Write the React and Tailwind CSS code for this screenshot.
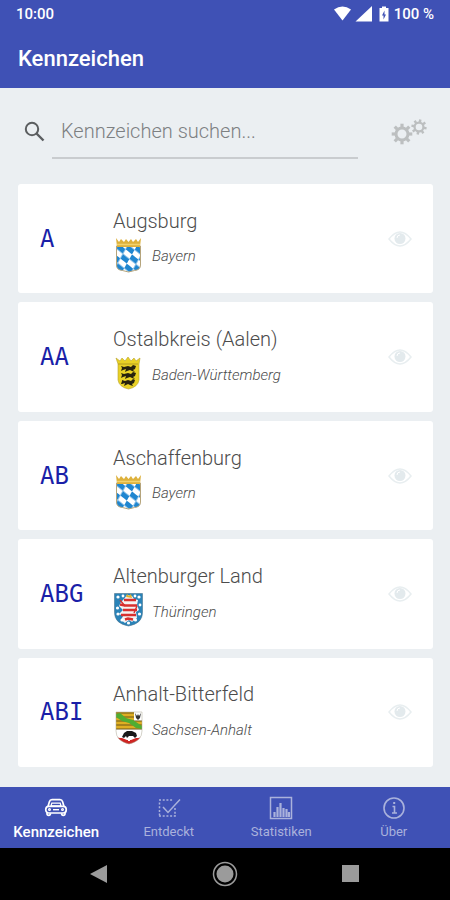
import React, { useState } from 'react'

const TEETH = [0, 45, 90, 135, 180, 225, 270, 315]

const DISTRICTS = [
  { code: 'A', name: 'Augsburg', state: 'Bayern', Arms: BayernArms },
  { code: 'AA', name: 'Ostalbkreis (Aalen)', state: 'Baden-Württemberg', Arms: BadenArms },
  { code: 'AB', name: 'Aschaffenburg', state: 'Bayern', Arms: BayernArms },
  { code: 'ABG', name: 'Altenburger Land', state: 'Thüringen', Arms: ThueringenArms },
  { code: 'ABI', name: 'Anhalt-Bitterfeld', state: 'Sachsen-Anhalt', Arms: SachsenAnhaltArms },
]

const TABS = [
  { label: 'Kennzeichen', Icon: CarIcon },
  { label: 'Entdeckt', Icon: FoundIcon },
  { label: 'Statistiken', Icon: ChartIcon },
  { label: 'Über', Icon: InfoIcon },
]

function BayernArms() {
  return (
    <svg viewBox="0 0 30 36" className="h-9 w-[30px]" aria-hidden="true">
      <defs>
        <pattern
          id="rauten"
          width="2"
          height="2"
          patternUnits="userSpaceOnUse"
          patternTransform="matrix(6.5 5.2 -2.6 4.6 5 7)"
        >
          <path fill="#fff" d="M0 0h2v2H0z" />
          <path fill="#1f86d0" d="M0 0h1v1H0zM1 1h1v1H1z" />
        </pattern>
      </defs>
      <path
        d="M2.500 9h24v19q0 5-6 5.500l-6 1.500l-6-1.500q-6-.5-6-5.500z"
        fill="url(#rauten)"
        stroke="#b5a47c"
      />
      <path d="M2 1l3 4 2-3 3 3 2-3 2.500 3 2.500-3 2 3 3-3 2 3 3-4-1 9H3z" fill="#ddb13c" />
      <path d="M3 7.500h23" stroke="#f2d36c" strokeWidth="1.500" />
    </svg>
  )
}

function BadenArms() {
  return (
    <svg viewBox="0 0 30 36" className="h-9 w-[30px]" aria-hidden="true">
      <path
        d="M2 3l4 3 2-3 3 3 3-4 3 4 3-3 2 3 4-3-1 6v16q-1 7-10.500 9q-9.500-2-10.500-9V9z"
        fill="#e9d125"
        stroke="#b7a22c"
        strokeWidth=".6"
      />
      <path d="M4 9h20" stroke="#b59c21" />
      <g fill="#27220d">
        <path d="M7 11l3 1 4-1 3 1 2-2 3 1-1 3-2 1 2 2-3-1-2-1-3 1-2 1 1-3-3 1-2 1 1-3z" />
        <path d="M7 18l3 1 4-1 3 1 2-2 3 1-1 3-2 1 2 2-3-1-2-1-3 1-2 1 1-3-3 1-2 1 1-3z" />
        <path d="M8 25l3 1 3-1 3 1 2-2 2 1-1 3-2 1 1 2-3-1-2-1-2 1-2 1 1-3-3 1-1 0 1-3z" />
      </g>
    </svg>
  )
}

function ThueringenArms() {
  return (
    <svg viewBox="0 0 30 36" className="h-9 w-[30px]" aria-hidden="true">
      <path
        d="M.5 1.500h28v19q0 11-14 13.500q-14-2.500-14-13.500z"
        fill="#2a83b8"
        stroke="#49748e"
        strokeWidth=".6"
      />
      <path d="M10 7l3-4 5 1 2 3 4 1-1 5 2 5-3 2 1 6-5 4-3-2-4 3-4-3 2-4-4-2 4-4-4-4 2-4z" fill="#f5f4f4" />
      <g stroke="#d8302f" strokeWidth="2.400" fill="none">
        <path d="M10 8h12M6 12.500l5 1h12M9 18h14M7 23h15M11 27.500l3-1 5 1" />
        <path d="M6 8l5 6M23 14l-3 7" strokeWidth="1.400" />
      </g>
      <path d="M12 5l1-3 2 2 2-2 1 4z" fill="#e6b028" />
      <g fill="#fff">
        <circle cx="4" cy="5" r="1.600" />
        <circle cx="9" cy="4" r="1.400" />
        <circle cx="21" cy="4" r="1.400" />
        <circle cx="25" cy="5" r="1.600" />
        <circle cx="3.500" cy="16" r="1.600" />
        <circle cx="26" cy="13" r="1.400" />
        <circle cx="4" cy="22" r="1.600" />
        <circle cx="25.500" cy="22" r="1.600" />
        <circle cx="8" cy="28" r="1.600" />
        <circle cx="21.500" cy="28" r="1.600" />
        <circle cx="14.500" cy="31" r="1.600" />
      </g>
    </svg>
  )
}

function SachsenAnhaltArms() {
  return (
    <svg viewBox="0 0 30 36" className="h-9 w-[30px]" aria-hidden="true">
      <clipPath id="anhalt">
        <path d="M2 2h26v19q0 10-13 13q-13-3-13-13z" />
      </clipPath>
      <g clipPath="url(#anhalt)">
        <path fill="#fff" d="M0 0h30v36H0z" />
        <path fill="#dfae22" d="M2 2h18v9h8v8H2z" />
        <path stroke="#6c5716" strokeWidth="1" d="M2 3h18M2 7h18M2 11h26M2 15h26M2 19h26" />
        <path d="M2 4l4-1 6 5 7 2 9 6v3l-6-1-7-5-7-2-6-4z" fill="#50ad32" />
        <path d="M21 3l2 3 1-2 1 2 2-3-1 5-2 2-2-2z" fill="#343434" />
        <path d="M0 27l6 1 2 0 5 2h4l5-2 2 0 6-1v9H0z" fill="#cf2523" />
        <path d="M14 27h2v4h-2z" fill="#fff" />
        <path d="M8 27l2-4 3-2 5 0 4 2 1 3-2 2-2-2-4 0-2 2-1-2-2 2z" fill="#191919" />
      </g>
      <path d="M2 2h26v19q0 10-13 13q-13-3-13-13z" fill="none" stroke="#a9a493" strokeWidth=".5" />
    </svg>
  )
}

function SearchIcon() {
  return (
    <svg viewBox="0 0 24 24" className="size-6" fill="none" stroke="#5b5e60" strokeWidth="2" aria-hidden="true">
      <circle cx="9" cy="9" r="6.200" />
      <path d="M13.500 13.500l7 7" strokeWidth="2.400" />
    </svg>
  )
}

function GearsIcon() {
  return (
    <svg viewBox="0 0 36 28" className="h-7 w-9" fill="none" stroke="#bcbfc0" aria-hidden="true">
      <circle cx="11" cy="16" r="6" strokeWidth="3" />
      {TEETH.map(a => (
        <path key={a} d="M11 9.500V5.700" strokeWidth="3.200" transform={`rotate(${a} 11 16)`} />
      ))}
      <circle cx="28" cy="9" r="4.400" strokeWidth="2.200" />
      {TEETH.map(a => (
        <path key={a} d="M28 4.500V1.300" strokeWidth="2.400" transform={`rotate(${a + 10} 28 9)`} />
      ))}
    </svg>
  )
}

function EyeIcon() {
  return (
    <svg viewBox="0 0 24 16" className="h-4 w-6" aria-hidden="true">
      <path d="M1 8q11-14 22 0q-11 14-22 0z" fill="none" stroke="#e8eef0" strokeWidth="1.500" />
      <circle cx="12" cy="7.500" r="5.500" fill="#e3eaed" />
      <path d="M9 7q0-3 3-3" fill="none" stroke="#fff" />
    </svg>
  )
}

function CarIcon() {
  return (
    <svg viewBox="0 0 24 24" className="size-6" fill="none" stroke="currentColor" strokeWidth="1.700" aria-hidden="true">
      <path d="M4 10.500l1.400-4.800q.6-2 2.600-2h8q2 0 2.600 2l1.400 4.800" />
      <path d="M7 9.800l.8-2.600h8.400l.8 2.600z" strokeWidth="1.200" />
      <rect x="1.800" y="10.300" width="20.400" height="6.700" rx="3" />
      <path d="M3 16.500v1.200q0 1.600 1.700 1.600t1.700-1.600v-.5M21 16.500v1.200q0 1.600-1.700 1.600t-1.700-1.600v-.5" />
      <path d="M9 13.700h6" strokeWidth="1.400" />
      <circle cx="5.500" cy="13.500" r=".9" strokeWidth="1.200" />
      <circle cx="18.500" cy="13.500" r=".9" strokeWidth="1.200" />
    </svg>
  )
}

function FoundIcon() {
  return (
    <svg viewBox="0 0 24 24" className="size-6" fill="none" stroke="currentColor" strokeWidth="1.500" aria-hidden="true">
      <path d="M2 4h14M2 20h17" strokeDasharray="2 1.700" />
      <path d="M2.500 6.500v13M18 12v8" strokeDasharray="2 1.700" />
      <path d="M6 11l5 5.500L23 3.500" />
    </svg>
  )
}

function ChartIcon() {
  return (
    <svg viewBox="0 0 24 24" className="size-6" fill="none" stroke="currentColor" aria-hidden="true">
      <path d="M1.500 1.500h21v21h-21z" strokeWidth="1.500" />
      <path d="M5.500 21v-5M8.500 21V11M11.500 21V7M14.500 21V12M17.500 21v-8M20 21v-5" strokeWidth="2.200" />
    </svg>
  )
}

function InfoIcon() {
  return (
    <svg viewBox="0 0 24 24" className="size-6" fill="none" stroke="currentColor" strokeWidth="1.600" aria-hidden="true">
      <circle cx="12" cy="12" r="10" />
      <path d="M10.500 10.500H12.500V17M10 17h5" />
      <path d="M12.200 6v2" strokeWidth="2" />
    </svg>
  )
}

function StatusBar() {
  return (
    <div className="flex h-7 items-center justify-between px-4 text-[15px] font-medium">
      <span>10:00</span>
      <div className="flex items-center">
        <svg viewBox="0 0 56 16" className="mr-1 h-4 w-14" fill="#fff" aria-hidden="true">
          <path d="M0 3.500q8.500-6 17 0L8.500 14.500z" />
          <path d="M38 0v15.500H21.500z" />
          <path
            fillRule="evenodd"
            d="M48 .5h4V2h2.500v13.500h-9V2H48zM50.500 4.500l-2.500 5h1.500v4l2.500-5h-1.500z"
          />
        </svg>
        <span>100 %</span>
      </div>
    </div>
  )
}

function DistrictCard({ district }) {
  const { code, name, state, Arms } = district

  return (
    <li className="flex flex-1 items-center rounded-[3px] bg-white pl-[22px] pr-[21px]">
      <span className="w-[73px] font-['DejaVu_Sans_Mono',monospace] text-2xl text-[#1a1fa8]">
        {code}
      </span>
      <div className="flex-1 pt-1">
        <h2 className="text-xl leading-7 font-light text-[#4c4c4c]">{name}</h2>
        <div className="flex h-10 items-center gap-2">
          <div className="pl-px">
            <Arms />
          </div>
          <span className="pt-1 text-[15px] font-light text-[#4c4c4c] italic">{state}</span>
        </div>
      </div>
      <button type="button" aria-label={`${name} als entdeckt markieren`}>
        <EyeIcon />
      </button>
    </li>
  )
}

export default function App() {
  const [query, setQuery] = useState('')
  const [activeTab, setActiveTab] = useState('Kennzeichen')

  const districts = DISTRICTS.filter(d =>
    `${d.code} ${d.name}`.toLowerCase().includes(query.toLowerCase())
  )

  return (
    <div className="flex min-h-screen flex-col bg-[#ebeff2] font-[Roboto,sans-serif]">
      <header className="bg-[#3f51b5] text-white">
        <StatusBar />
        <h1 className="flex h-[60px] items-center px-[18px] text-[22px] font-medium">Kennzeichen</h1>
      </header>

      <main className="flex flex-1 flex-col pr-[17px] pb-5 pl-[18px]">
        <div className="flex h-24 items-center pb-2">
          <label htmlFor="search" aria-label="Suchen" className="w-[34px] pl-[5px]">
            <SearchIcon />
          </label>
          <input
            id="search"
            type="text"
            value={query}
            onChange={e => setQuery(e.target.value)}
            placeholder="Kennzeichen suchen..."
            className="h-[54px] min-w-0 flex-1 border-b-2 border-[#c9cccf] bg-transparent px-[9px] text-xl font-light text-[#555] outline-none placeholder:text-[#7d8082]"
          />
          <button type="button" aria-label="Einstellungen" className="ml-[33px] pr-[6px]">
            <GearsIcon />
          </button>
        </div>

        <ul className="flex flex-1 flex-col gap-[9px]">
          {districts.map(d => (
            <DistrictCard key={d.code} district={d} />
          ))}
        </ul>
      </main>

      <nav className="grid h-[61px] grid-cols-4 bg-[#3f51b5] pt-[3px]">
        {TABS.map(({ label, Icon }) => (
          <button
            key={label}
            type="button"
            onClick={() => setActiveTab(label)}
            className={
              label === activeTab
                ? 'flex flex-col items-center justify-center gap-[2px] text-[15px] leading-5 font-medium text-white'
                : 'flex flex-col items-center justify-center gap-[2px] text-[13px] leading-5 text-[#aab2dc]'
            }
          >
            <Icon />
            {label}
          </button>
        ))}
      </nav>

      <div className="grid h-[52px] grid-cols-[1fr_56px_1fr] items-center bg-black px-[87px]">
        <button type="button" aria-label="Zurück">
          <svg viewBox="0 0 20 20" className="size-5" fill="#9b9b9b" aria-hidden="true">
            <path d="M3 10L20 1v18z" />
          </svg>
        </button>
        <button type="button" aria-label="Startseite" className="flex justify-center">
          <svg viewBox="0 0 26 26" className="size-[26px]" aria-hidden="true">
            <circle cx="13" cy="13" r="11.500" fill="none" stroke="#9b9b9b" strokeWidth="1.500" />
            <circle cx="13" cy="13" r="8.500" fill="#9b9b9b" />
          </svg>
        </button>
        <button type="button" aria-label="Letzte Apps" className="flex justify-end">
          <svg viewBox="0 0 26 20" className="h-5 w-[26px]" fill="#9b9b9b" aria-hidden="true">
            <path d="M5 1h17v17H5z" />
          </svg>
        </button>
      </div>
    </div>
  )
}
